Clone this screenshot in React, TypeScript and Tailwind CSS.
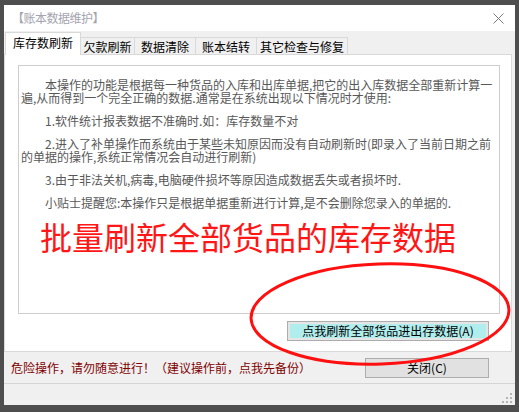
const FONT = "font-['Noto_Sans_CJK_SC','Noto_Sans',sans-serif]";

const tabs = [
  { label: "欠款刷新", w: "w-[55px]" },
  { label: "数据清除", w: "w-[62px]" },
  { label: "账本结转", w: "w-[62px]" },
  { label: "其它检查与修复", w: "w-[92px]" },
];

function CloseIcon() {
  return (
    <svg width="11" height="11" viewBox="0 0 11 11" aria-hidden>
      <path d="M0.5 0.5L10.5 10.5M10.5 0.5L0.5 10.5" stroke="#7a7a7a" strokeWidth="1" fill="none" />
    </svg>
  );
}

function Grip() {
  const dots = [
    [8, 0],
    [4, 4],
    [8, 4],
    [0, 8],
    [4, 8],
    [8, 8],
  ];
  return (
    <svg width="10" height="10" viewBox="0 0 10 10" aria-hidden>
      {dots.map(([x, y]) => (
        <rect key={`${x}-${y}`} x={x} y={y} width="2" height="2" fill="#b4b4b4" />
      ))}
    </svg>
  );
}

export default function App() {
  return (
    <div className={`relative w-[519px] h-[412px] bg-[#4e4e4e] pl-[4px] pr-[4px] pt-[5px] pb-[7px] ${FONT}`}>
      <div className="flex flex-col h-full bg-[#f0f0f0]">
        {/* title bar */}
        <div className="h-[26px] bg-white flex items-center justify-between pl-[8px] pr-[11px]">
          <span className="text-[12px] leading-none tracking-[-0.5px] text-[#a4a4ae]">【账本数据维护】</span>
          <CloseIcon />
        </div>

        {/* tabs */}
        <div className="h-[23px] flex items-end pl-[1px]">
          <div className="relative z-10 -mb-px h-[23px] w-[76px] bg-white border border-b-0 border-[#d9d9d9] flex items-center justify-center pb-[2px] text-[12px] text-black">
            库存数刷新
          </div>
          {tabs.map((t) => (
            <div
              key={t.label}
              className={`${t.w} h-[17px] -ml-px first:ml-0 bg-[#f0f0f0] border border-b-0 border-[#d9d9d9] flex items-center justify-center pt-[1px] text-[12px] leading-none text-black`}
            >
              {t.label}
            </div>
          ))}
        </div>

        {/* tab page */}
        <div className="h-[298px] mr-[3px] bg-white border border-[#d9d9d9] pt-[10px] pl-[13px] pr-[10px]">
          <div className="h-[249px] w-[482px] border border-[#cdcdcd] pt-[12px] pl-[2px] text-[12px] leading-[13px] text-[#585858] whitespace-nowrap">
            <p className="indent-[24px]">
              本操作的功能是根据每一种货品的入库和出库单据,把它的出入库数据全部重新计算一
              <br />
              遍,从而得到一个完全正确的数据.通常是在系统出现以下情况时才使用:
            </p>
            <p className="indent-[24px] mt-[10px]">1.软件统计报表数据不准确时.如：库存数量不对</p>
            <p className="indent-[24px] mt-[10px]">
              2.进入了补单操作而系统由于某些未知原因而没有自动刷新时(即录入了当前日期之前
              <br />
              的单据的操作,系统正常情况会自动进行刷新)
            </p>
            <p className="indent-[24px] mt-[10px]">3.由于非法关机,病毒,电脑硬件损坏等原因造成数据丢失或者损坏时.</p>
            <p className="indent-[24px] mt-[10px]">小贴士提醒您:本操作只是根据单据重新进行计算,是不会删除您录入的单据的.</p>
            <p className="mt-[11px] pl-[19px] text-[32px] leading-none text-[#ff1616]">批量刷新全部货品的库存数据</p>
          </div>
          <div className="flex justify-end pr-[12px] mt-[7px]">
            <button className="w-[202px] h-[20px] border border-[#adadad] bg-[#e5e5e5] p-[2px] flex">
              <span className="flex-1 bg-[#b0eeee] flex items-center justify-center text-[12px] leading-none text-black">
                点我刷新全部货品进出存数据(A)
              </span>
            </button>
          </div>
        </div>

        {/* footer */}
        <div className="h-[32px] flex items-center justify-between pl-[7px] pr-[26px] border-b border-[#d5d5d5]">
          <span className="text-[12px] leading-none text-[#800000]">危险操作，请勿随意进行！（建议操作前，点我先备份）</span>
          <button className="w-[124px] h-[20px] border border-[#adadad] bg-[#e1e1e1] text-[12px] leading-none text-black">
            关闭(C)
          </button>
        </div>
        <div className="flex-1 flex items-end justify-end pr-[3px] pb-[2px]">
          <Grip />
        </div>
      </div>

      {/* red annotation ellipse */}
      <svg className="absolute inset-0 pointer-events-none" width="519" height="412" viewBox="0 0 519 412" aria-hidden>
        <ellipse
          cx="380"
          cy="314"
          rx="129"
          ry="50"
          transform="rotate(-2 380 314)"
          fill="none"
          stroke="#ff1010"
          strokeWidth="3"
        />
      </svg>
    </div>
  );
}
